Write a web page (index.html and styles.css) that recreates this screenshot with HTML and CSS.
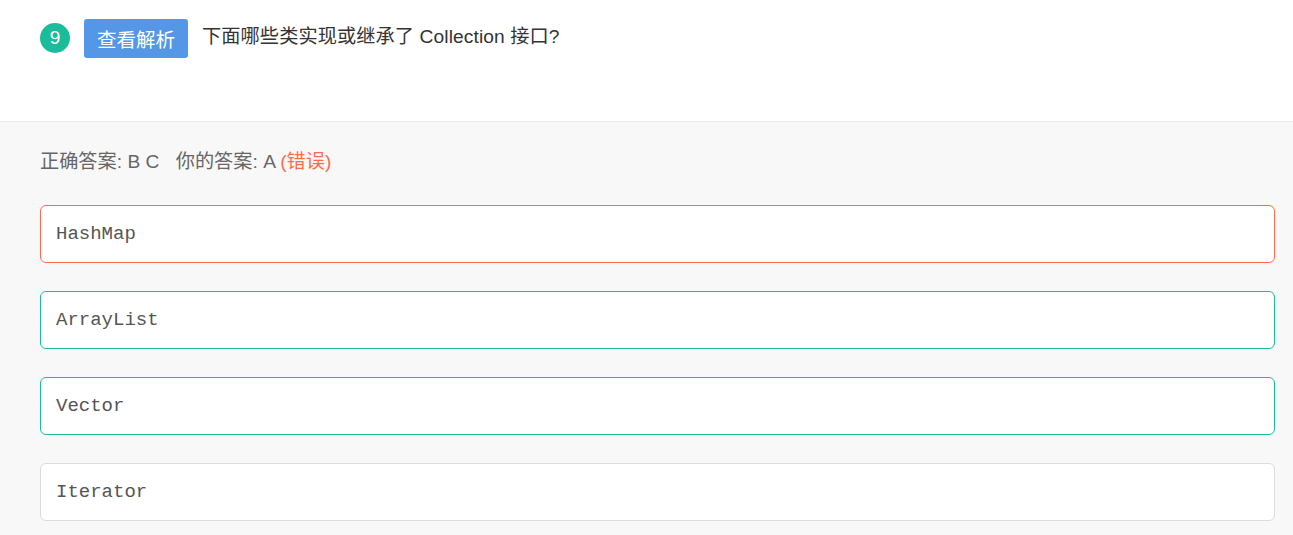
FILE: index.html
```html
<!DOCTYPE html>
<html>
<head>
<meta charset="utf-8">
<link rel="stylesheet" href="styles.css">
</head>
<body>
<div class="head">
  <div class="qline">
    <span class="num">9</span>
    <span class="btn">查看解析</span>
    <span class="qtext">下面哪些类实现或继承了 Collection 接口?</span>
  </div>
</div>
<div class="body">
  <div class="answer">正确答案: B C <span class="gap"></span>你的答案: A <span class="wrong">(错误)</span></div>
  <div class="opt opt-wrong">HashMap</div>
  <div class="opt opt-right">ArrayList</div>
  <div class="opt opt-right">Vector</div>
  <div class="opt">Iterator</div>
</div>
</body>
</html>
```
FILE: styles.css
```css
html, body { margin: 0; padding: 0; }
body {
  font-family: "Liberation Sans", "Noto Sans CJK SC", sans-serif;
  background: #f8f8f8;
  width: 1293px;
  height: 535px;
  overflow: hidden;
}
.head {
  background: #fff;
  height: 122px;
  border-bottom: 1px solid #eaeaea;
  box-sizing: border-box;
  padding: 19px 40px 0;
}
.qline {
  display: flex;
  align-items: center;
  height: 39px;
}
.num {
  width: 30px;
  height: 30px;
  border-radius: 50%;
  background: #1abc9c;
  color: #fff;
  font-size: 19px;
  display: flex;
  align-items: center;
  justify-content: center;
  margin-right: 14px;
  position: relative;
  top: -1px;
}
.btn {
  background: #5397e6;
  color: #fff;
  font-size: 19.5px;
  height: 39px;
  width: 104px;
  border-radius: 3px;
  display: flex;
  align-items: center;
  justify-content: center;
  margin-right: 14px;
}
.qtext {
  font-size: 19.2px;
  letter-spacing: 0.1px;
  color: #333;
  position: relative;
  top: -4px;
}
.body {
  padding: 26px 18px 0 40px;
}
.answer {
  font-size: 19.2px;
  color: #666;
  line-height: 28px;
  margin-bottom: 29px;
}
.gap { display: inline-block; width: 11px; }
.wrong { color: #ff6a4c; }
.opt {
  height: 58px;
  box-sizing: border-box;
  border: 1px solid #dcdcdc;
  border-radius: 6px;
  background: #fff;
  font-family: "Liberation Mono", monospace;
  font-size: 19px;
  color: #555;
  display: flex;
  align-items: center;
  padding-left: 15px;
  margin-bottom: 28px;
}
.opt-wrong { border-color: #ff6a4c; }
.opt-right { border-color: #1abc9c; }
```
